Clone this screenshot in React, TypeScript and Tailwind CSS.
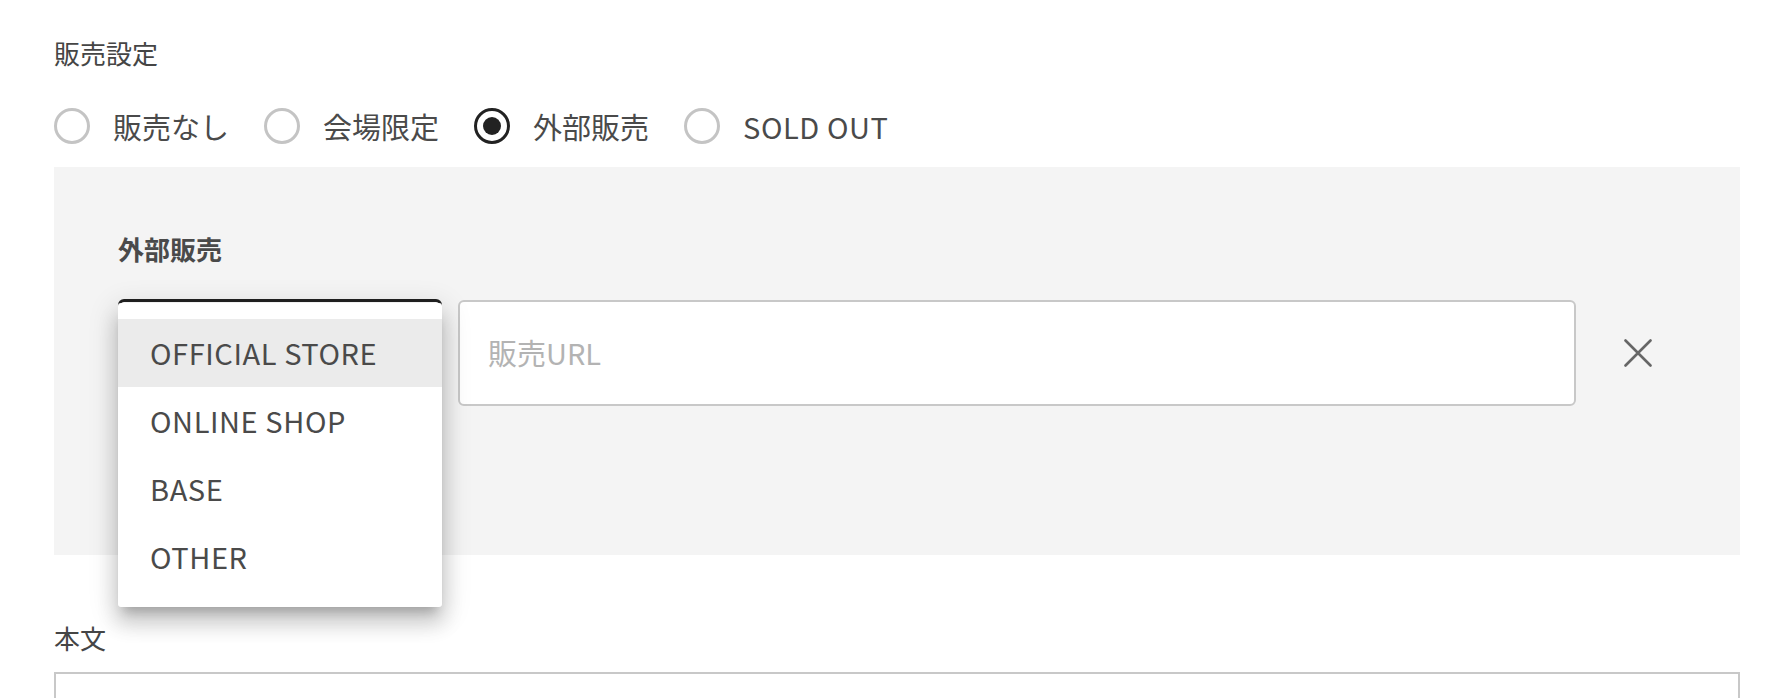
export default function App() {
  const radios = [
    { label: "販売なし", checked: false, latin: false },
    { label: "会場限定", checked: false, latin: false },
    { label: "外部販売", checked: true, latin: false },
    { label: "SOLD OUT", checked: false, latin: true },
  ];
  const items = ["OFFICIAL STORE", "ONLINE SHOP", "BASE", "OTHER"];
  return (
    <div className="h-[698px] overflow-hidden bg-white font-['Noto_Sans_CJK_JP','Noto_Sans',sans-serif] text-[#454545]">
      <div className="pl-[54px] pr-[44px] pt-[35px]">
        <div className="text-[26px] leading-[36px]">販売設定</div>
        <div className="mt-[31px] flex h-[48px] items-center gap-[35px]">
          {radios.map((r) => (
            <label key={r.label} className="flex items-center">
              <span
                className={`flex h-[36px] w-[36px] items-center justify-center rounded-full border-[3px] ${
                  r.checked ? "border-[#222222]" : "border-[#c4c4c4]"
                }`}
              >
                {r.checked && <span className="h-[18px] w-[18px] rounded-full bg-[#222222]" />}
              </span>
              <span
                className={`ml-[23px] text-[29px] leading-[48px] text-[#4a4a4a] ${
                  r.latin ? "tracking-[0.02em]" : ""
                }`}
              >
                {r.label}
              </span>
            </label>
          ))}
        </div>
        <div className="mt-[17px] h-[388px] bg-[#f4f4f4] pl-[64px] pt-[64px]">
          <div className="text-[26px] font-bold leading-[36px] text-[#4a4a4a]">外部販売</div>
          <div className="mt-[32px] flex items-center">
            <div className="relative h-[108px] w-[324px] rounded-[6px] border-[3px] border-[#222222] bg-white">
              <div className="absolute left-[-3px] top-[1px] z-10 w-[324px] rounded-[3px] bg-white py-[16px] shadow-[0_10px_10px_-6px_rgba(0,0,0,0.2),0_16px_20px_2px_rgba(0,0,0,0.14),0_6px_28px_4px_rgba(0,0,0,0.12)]">
                {items.map((it, i) => (
                  <div
                    key={it}
                    className={`flex h-[68px] items-center pl-[32px] text-[29px] tracking-[0.02em] text-[#4a4a4a] ${
                      i === 0 ? "bg-[#ebebeb]" : ""
                    }`}
                  >
                    {it}
                  </div>
                ))}
              </div>
            </div>
            <div className="ml-[16px] flex h-[106px] w-[1118px] items-center rounded-[6px] border-2 border-[#c8c8c8] bg-white pl-[28px] text-[29px] text-[#b3b3b3]">
              販売URL
            </div>
            <button className="ml-[36px] flex h-[52px] w-[52px] items-center justify-center">
              <svg width="28" height="28" viewBox="0 0 28 28" fill="none">
                <path d="M1.5 1.5L26.5 26.5M26.5 1.5L1.5 26.5" stroke="#666666" strokeWidth="2.6" strokeLinecap="round" />
              </svg>
            </button>
          </div>
        </div>
        <div className="mt-[65px] text-[26px] leading-[36px]">本文</div>
        <div className="mt-[16px] h-[200px] border-2 border-[#c8c8c8]" />
      </div>
    </div>
  );
}
